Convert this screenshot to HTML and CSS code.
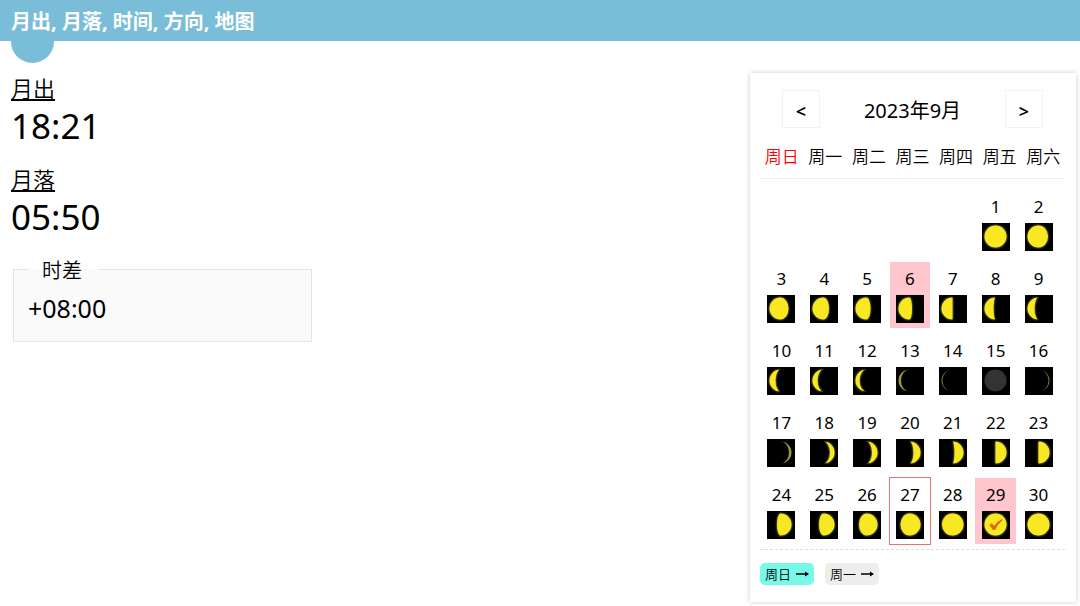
FILE: index.html
```html
<!DOCTYPE html>
<html lang="zh-CN">
<head>
<meta charset="utf-8">
<meta name="viewport" content="width=device-width, initial-scale=1">
<title>月出, 月落, 时间, 方向, 地图</title>
<link rel="stylesheet" href="styles.css">
</head>
<body>
<header class="topbar"><h1 class="topbar-title">月出, 月落, 时间, 方向, 地图</h1></header>
<div class="tab"></div>
<main class="content">
  <section class="info">
    <div class="event"><h2 class="event-name">月出</h2><p class="event-time">18:21</p></div>
    <div class="event"><h2 class="event-name">月落</h2><p class="event-time">05:50</p></div>
    <fieldset class="zone">
      <legend class="zone-name">时差</legend>
      <p class="zone-value">+08:00</p>
    </fieldset>
  </section>
  <section class="calendar" aria-label="2023年9月">
    <div class="month">
      <button class="month-step" type="button">&lt;</button>
      <h2 class="month-name">2023年9月</h2>
      <button class="month-step" type="button">&gt;</button>
    </div>
    <div class="weekdays">
      <span class="sunday">周日</span><span>周一</span><span>周二</span><span>周三</span><span>周四</span><span>周五</span><span>周六</span>
    </div>
    <table class="days"><tbody id="days"></tbody></table>
    <div class="week-start">
      <button class="start start-on" type="button">周日 <svg class="arrow" viewBox="0 0 13 8"><path d="M0 3.200h9V1.500L13 4 9 6.500V4.800H0z"/></svg></button>
      <button class="start" type="button">周一 <svg class="arrow" viewBox="0 0 13 8"><path d="M0 3.200h9V1.500L13 4 9 6.500V4.800H0z"/></svg></button>
    </div>
  </section>
</main>
<script src="calendar.js"></script>
</body>
</html>
```
FILE: styles.css
```css
* {
  box-sizing: border-box;
}

body {
  margin: 0;
  background: #fff;
  color: #000;
  font-family: "Noto Sans", "Noto Sans CJK SC", sans-serif;
}

h1, h2, p {
  margin: 0;
  font-weight: 400;
}

button {
  margin: 0;
  color: inherit;
  font-family: inherit;
  cursor: pointer;
}

.topbar {
  padding: 8px 11px 5px;
  background: #79bdd9;
}

.topbar-title {
  color: #fff;
  font-size: 20px;
  font-weight: 700;
  line-height: 28px;
}

.tab {
  width: 43px;
  height: 22px;
  margin-left: 11px;
  border-radius: 0 0 22px 22px;
  background: #79bdd9;
}

.content {
  display: flex;
  justify-content: space-between;
  align-items: flex-start;
  padding: 10px 4px 4px 11px;
}

.info {
  display: flex;
  flex-direction: column;
  gap: 15px;
}

.event-name {
  font-size: 22px;
  font-weight: 350;
  line-height: 30px;
  text-decoration: underline;
  text-decoration-thickness: 2px;
  text-underline-offset: 2px;
}

.event-time {
  font-size: 35px;
  line-height: 46px;
}

.zone {
  width: 299px;
  margin: 0 2px;
  padding: 4px 14px 13px;
  border: 1px solid #e4e4e4;
  background: #fafafa;
}

.zone-name {
  padding: 3px 16px 0 14px;
  background: linear-gradient(#fff 50%, #fafafa 50%);
  font-size: 20px;
  font-weight: 350;
  line-height: 26px;
}

.zone-value {
  font-size: 25px;
  line-height: 40px;
}

.calendar {
  width: 326px;
  padding: 17px 11px 17px 10px;
  background: #fff;
  box-shadow: 0 0 5px #ccc;
}

.month {
  display: flex;
  justify-content: space-between;
  align-items: center;
  padding: 0 22px;
}

.month-step {
  width: 38px;
  height: 38px;
  padding: 3px 0 0;
  border: 1px solid #f2f2f2;
  background: #fff;
  font-size: 18px;
  font-weight: 600;
}

.month-name {
  padding-top: 3px;
  font-size: 20px;
  line-height: 28px;
}

.weekdays {
  display: grid;
  grid-template-columns: repeat(7, 1fr);
  margin-top: 15px;
  padding-bottom: 7px;
  border-bottom: 1px solid #eee;
  font-size: 17px;
  font-weight: 350;
  line-height: 28px;
  text-align: center;
}

.sunday {
  color: #f00;
}

.days {
  width: 300px;
  margin-top: 8px;
  border-collapse: collapse;
  table-layout: fixed;
}

.day-cell {
  height: 72px;
  padding: 0 1px;
}

.day {
  display: flex;
  flex-direction: column;
  align-items: center;
  gap: 4px;
  width: 100%;
  padding: 5px 0;
  border: 0;
  background: none;
  font-size: 17px;
  line-height: 24px;
}

.day-marked {
  background: #ffc6cd;
}

.day-today {
  outline: 1px solid #e87078;
}

.moon {
  width: 28px;
  height: 28px;
  background: #000;
}

.lit {
  fill: #f8e824;
  filter: drop-shadow(0 0 1px #c8bc20);
}

.lit-dim {
  fill: #a19a32;
}

.lit-faint {
  fill: #77722e;
}

.new-moon {
  fill: #333;
}

.tick {
  fill: #e0661a;
}

.week-start {
  display: flex;
  gap: 11px;
  margin-top: 2px;
  padding-top: 13px;
  border-top: 1px dashed #ddd;
}

.start {
  display: flex;
  align-items: center;
  gap: 5px;
  padding: 0 5px;
  border: 0;
  border-radius: 5px;
  background: #ededed;
  font-size: 13px;
  font-weight: 350;
  line-height: 22px;
}

.start-on {
  background: #78f8e8;
}

.arrow {
  width: 13px;
  height: 8px;
}
```
FILE: calendar.js
```javascript
// Terminator width per day: positive bulges past the centre, negative is a crescent.
const phases = [
  11, 9.5, 8, 5.5, 4, 2.5, 0, -2, -4, -5, -6, -7, -8.5, -10, null,
  -10, -8.5, -6.5, -5.5, -4, -2, 0, 0, 3.5, 4.5, 7.5, 9, 10.5, 11, 11
];
const firstWeekday = 5;
const marked = [6, 29];
const today = 27;

function moon(day) {
  const phase = phases[day - 1];
  let shape;
  if (phase === null) {
    shape = '<circle class="new-moon" cx="13.5" cy="13.5" r="11"/>';
  } else {
    const side = day < 15 ? 0 : 1;
    const back = phase >= 0 ? side : 1 - side;
    const tone = phase <= -10 ? 'lit-faint' : phase <= -8.5 ? 'lit-dim' : 'lit';
    shape = `<path class="${tone}" d="M13.5 2.5A11 11 0 0 ${side} 13.5 24.5A${Math.abs(phase)} 11 0 0 ${back} 13.5 2.5z"/>`;
  }
  if (day === 29) {
    shape += '<path class="tick" d="M7.500 14q1-1.800 2.500-1.500l2 2.500Q15 10.500 20 8l.5 1Q16 13 13 19h-2z"/>';
  }
  return `<svg class="moon" viewBox="0 0 28 28">${shape}</svg>`;
}

const body = document.getElementById('days');
let row;
for (let slot = 0; slot < 35; slot++) {
  if (slot % 7 === 0) row = body.insertRow();
  const cell = row.insertCell();
  cell.className = 'day-cell';
  const day = slot - firstWeekday + 1;
  if (day < 1) continue;
  const state = (marked.includes(day) ? ' day-marked' : '') + (day === today ? ' day-today' : '');
  cell.innerHTML = `<button type="button" class="day${state}"><span>${day}</span>${moon(day)}</button>`;
}
```
